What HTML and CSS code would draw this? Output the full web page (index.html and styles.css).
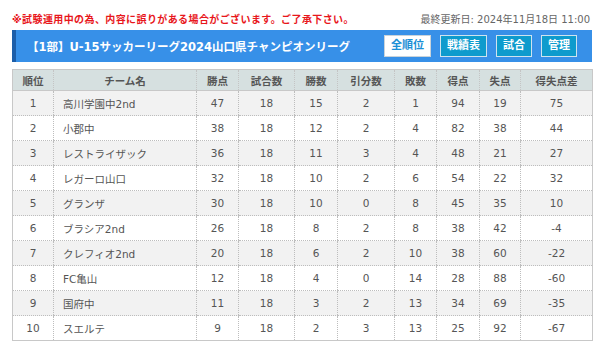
FILE: index.html
```html
<!DOCTYPE html>
<html lang="ja">
<head>
<meta charset="utf-8">
<link rel="stylesheet" href="styles.css">
</head>
<body>
<div class="page">
  <div class="topline">
    <span class="notice">※試験運用中の為、内容に誤りがある場合がございます。ご了承下さい。</span>
    <span class="updated">最終更新日: 2024年11月18日 11:00</span>
  </div>
  <div class="titlebar">
    <h1 class="title">【1部】U-15サッカーリーグ2024山口県チャンピオンリーグ</h1>
    <div class="btns">
      <span class="btn btn-active">全順位</span>
      <span class="btn">戦績表</span>
      <span class="btn">試合</span>
      <span class="btn">管理</span>
    </div>
  </div>
  <table class="standings">
    <colgroup>
      <col class="c-rank"><col class="c-team"><col class="c-pts"><col class="c-gp"><col class="c-w"><col class="c-d"><col class="c-l"><col class="c-gf"><col class="c-ga"><col class="c-gd">
    </colgroup>
    <thead>
      <tr><th>順位</th><th>チーム名</th><th>勝点</th><th>試合数</th><th>勝数</th><th>引分数</th><th>敗数</th><th>得点</th><th>失点</th><th>得失点差</th></tr>
    </thead>
    <tbody>
      <tr><td>1</td><td class="team">高川学園中2nd</td><td>47</td><td>18</td><td>15</td><td>2</td><td>1</td><td>94</td><td>19</td><td>75</td></tr>
      <tr><td>2</td><td class="team">小郡中</td><td>38</td><td>18</td><td>12</td><td>2</td><td>4</td><td>82</td><td>38</td><td>44</td></tr>
      <tr><td>3</td><td class="team">レストライザック</td><td>36</td><td>18</td><td>11</td><td>3</td><td>4</td><td>48</td><td>21</td><td>27</td></tr>
      <tr><td>4</td><td class="team">レガーロ山口</td><td>32</td><td>18</td><td>10</td><td>2</td><td>6</td><td>54</td><td>22</td><td>32</td></tr>
      <tr><td>5</td><td class="team">グランザ</td><td>30</td><td>18</td><td>10</td><td>0</td><td>8</td><td>45</td><td>35</td><td>10</td></tr>
      <tr><td>6</td><td class="team">ブラシア2nd</td><td>26</td><td>18</td><td>8</td><td>2</td><td>8</td><td>38</td><td>42</td><td>-4</td></tr>
      <tr><td>7</td><td class="team">クレフィオ2nd</td><td>20</td><td>18</td><td>6</td><td>2</td><td>10</td><td>38</td><td>60</td><td>-22</td></tr>
      <tr><td>8</td><td class="team">FC亀山</td><td>12</td><td>18</td><td>4</td><td>0</td><td>14</td><td>28</td><td>88</td><td>-60</td></tr>
      <tr><td>9</td><td class="team">国府中</td><td>11</td><td>18</td><td>3</td><td>2</td><td>13</td><td>34</td><td>69</td><td>-35</td></tr>
      <tr><td>10</td><td class="team">スエルテ</td><td>9</td><td>18</td><td>2</td><td>3</td><td>13</td><td>25</td><td>92</td><td>-67</td></tr>
    </tbody>
  </table>
</div>
</body>
</html>
```
FILE: styles.css
```css
html, body {
  margin: 0;
  padding: 0;
  background: #fff;
}
body {
  font-family: "DejaVu Sans", "Noto Sans CJK JP", sans-serif;
  color: #555;
}
.page {
  width: 580px;
  padding: 8px 13px 0 12px;
}
.topline {
  display: flex;
  justify-content: space-between;
  align-items: center;
  height: 20px;
}
.notice {
  color: #e8161b;
  font-size: 10px;
  font-weight: bold;
  letter-spacing: 0.4px;
}
.updated {
  color: #666;
  font-size: 10px;
  padding-right: 2px;
}
.titlebar {
  margin-top: 2px;
  height: 32px;
  display: flex;
  align-items: center;
  background: #3790e8;
  border-left: 4px solid #1c5ea9;
  padding: 0 15px 0 11px;
}
.title {
  flex: 1;
  margin: 0;
  color: #fff;
  font-size: 11.5px;
  font-weight: bold;
  white-space: nowrap;
}
.btns {
  display: flex;
  gap: 9px;
}
.btn {
  display: block;
  height: 20px;
  line-height: 20px;
  padding: 0 6px;
  border: 1px solid #cfe3ee;
  background: #0e9bcd;
  color: #fff;
  font-size: 11px;
  font-weight: bold;
}
.btn-active {
  background: #fff;
  color: #1b8fd6;
  border-color: #c9d3da;
}
.standings {
  margin-top: 7px;
  width: 580px;
  table-layout: fixed;
  border-collapse: collapse;
  border: 1px solid #c8c8c8;
  font-size: 10.5px;
}
.c-rank { width: 41px; }
.c-team { width: 143px; }
.c-pts { width: 42px; }
.c-gp { width: 56px; }
.c-w { width: 43px; }
.c-d { width: 57px; }
.c-l { width: 42px; }
.c-gf { width: 43px; }
.c-ga { width: 41px; }
.c-gd { width: 72px; }
.standings th {
  height: 20px;
  padding: 0;
  background: #d6e0e0;
  color: #555;
  font-weight: bold;
  text-align: center;
  border-left: 1px dotted #c4c4c4;
  border-bottom: 1px solid #c8c8c8;
}
.standings td {
  height: 24px;
  padding: 0;
  text-align: center;
  color: #555;
  border-left: 1px dotted #bdbdbd;
  border-bottom: 1px dotted #bdbdbd;
}
.standings th:first-child,
.standings td:first-child {
  border-left: 1px solid #c8c8c8;
}
.standings td.team {
  text-align: left;
  padding-left: 9px;
}
.standings tbody tr:nth-child(odd) td {
  background: #f2f2f2;
}
.standings tbody tr:nth-child(even) td {
  background: #fff;
}
```
